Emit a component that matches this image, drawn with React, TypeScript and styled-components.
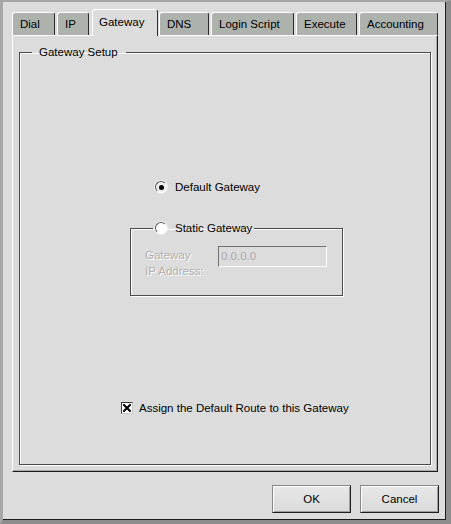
import React from "react";
import styled, { createGlobalStyle, css } from "styled-components";

const GlobalStyle = createGlobalStyle`
  html, body { margin: 0; padding: 0; background: #dcdcdc; }
  body {
    font-family: "Liberation Sans", Arial, sans-serif;
    font-size: 11.5px;
    color: #000;
  }
  * { box-sizing: border-box; }
`;

const Frame = styled.div`
  width: 451px;
  height: 524px;
  background: #dcdcdc;
  border-left: 3px solid #a6a6a6;
  border-top: 2px solid #a6a6a6;
  border-right: 5px solid #8c8c8c;
  border-bottom: 4px solid #8c8c8c;
  display: flex;
  flex-direction: column;
`;

const Window = styled.div`
  flex: 1;
  display: flex;
  flex-direction: column;
  border-right: 1px solid #1c1c1c;
  border-bottom: 1px solid #1c1c1c;
  padding: 7px 7px 6px 9px;
`;

const TabBar = styled.div`
  height: 26px;
  display: flex;
  align-items: flex-end;
  gap: 2px;
`;

const Tab = styled.div<{ $width: number; $active?: boolean }>`
  width: ${(p) => p.$width}px;
  height: 23px;
  flex: none;
  background: #aeb2ad;
  border-top: 1px solid #ffffff;
  border-left: 1px solid #ffffff;
  border-right: 1px solid #2c2c2c;
  border-radius: 3px 3px 0 0;
  padding: 1px 0 0 7px;
  line-height: 21px;
  white-space: nowrap;
  ${(p) =>
    p.$active &&
    css`
      position: relative;
      z-index: 1;
      height: 27px;
      margin: 0 -1px -1px 1px;
      background: #dcdcdc;
      padding: 2px 0 0 6px;
    `}
`;

const Panel = styled.div`
  flex: 1;
  display: flex;
  border-top: 1px solid #ffffff;
  border-left: 1px solid #ffffff;
  border-right: 1px solid #1c1c1c;
  border-bottom: 1px solid #1c1c1c;
  box-shadow: inset -1px -1px 0 #a8a8a8;
  padding: 9px 6px 6px 6px;
`;

const Group = styled.fieldset`
  flex: 1;
  min-width: 0;
  margin: 0;
  padding: 0;
  border: 1px solid #4a4a4a;
  box-shadow: inset 1px 1px 0 #ffffff, 1px 1px 0 #ffffff;
`;

const GroupLegend = styled.legend`
  margin-left: 12px;
  padding: 0 8px 0 7px;
  line-height: 14px;
`;

const Body = styled.div`
  display: flex;
  flex-direction: column;
  align-items: flex-start;
  padding-left: 101px;
`;

const OptionRow = styled.label<{ $indent: number; $top: number; $gap: number }>`
  display: flex;
  align-items: center;
  gap: ${(p) => p.$gap}px;
  height: 14px;
  line-height: 14px;
  margin-left: ${(p) => p.$indent}px;
  margin-top: ${(p) => p.$top}px;
  white-space: nowrap;
`;

const Radio = styled.span<{ $checked?: boolean }>`
  width: 12px;
  height: 12px;
  flex: none;
  border-radius: 50%;
  border: 1px solid;
  border-color: #5a5a5a #ffffff #ffffff #5a5a5a;
  background: ${(p) => (p.$checked ? "#ececec" : "#ffffff")};
  box-shadow: 0 0 0 1px rgba(255, 255, 255, 0.5);
  display: flex;
  align-items: center;
  justify-content: center;
  &::after {
    content: "";
    display: ${(p) => (p.$checked ? "block" : "none")};
    width: 5px;
    height: 5px;
    border-radius: 50%;
    background: #000;
  }
`;

const SubGroup = styled.fieldset<{ $indent: number; $top: number }>`
  width: 213px;
  margin: ${(p) => p.$top}px 0 0 ${(p) => p.$indent}px;
  padding: 11px 0 16px 14px;
  border: 1px solid #4a4a4a;
  box-shadow: inset 1px 1px 0 #ffffff, 1px 1px 0 #ffffff;
`;

const SubLegend = styled.legend`
  margin-left: 8px;
  padding: 0 2px;
  line-height: 14px;
  display: flex;
  align-items: center;
  gap: 8px;
`;

const FieldRow = styled.div`
  display: flex;
  align-items: flex-start;
`;

const DisabledLabel = styled.div`
  width: 73px;
  margin-top: 1px;
  line-height: 16px;
  color: #b0b0b0;
  text-shadow: 1px 1px 0 #ffffff;
`;

const AddressInput = styled.div`
  width: 109px;
  height: 21px;
  border: 1px solid;
  border-color: #707070 #ffffff #ffffff #707070;
  padding-left: 2px;
  line-height: 19px;
  color: #ababab;
`;

const CheckBox = styled.span`
  width: 12px;
  height: 12px;
  flex: none;
  background: #ffffff;
  border: 1px solid;
  border-color: #3a3a3a #c8c8c8 #c8c8c8 #3a3a3a;
  display: flex;
  align-items: center;
  justify-content: center;
`;

const ButtonRow = styled.div`
  display: flex;
  justify-content: flex-end;
  gap: 9px;
  margin: 13px -1px 0 0;
`;

const Button = styled.button`
  width: 79px;
  height: 28px;
  margin: 0;
  padding: 0;
  font: inherit;
  color: #000;
  background: linear-gradient(#e8e8e8, #dadada);
  border: 1px solid;
  border-color: #8a8a8a #1e1e1e #1e1e1e #8a8a8a;
  box-shadow: inset 1px 1px 0 #ffffff, inset -1px -1px 0 #a0a0a0;
`;

const tabs = [
  { label: "Dial", width: 43 },
  { label: "IP", width: 32 },
  { label: "Gateway", width: 66, active: true },
  { label: "DNS", width: 50 },
  { label: "Login Script", width: 83 },
  { label: "Execute", width: 61 },
  { label: "Accounting", width: 79 },
];

export default function App() {
  return (
    <>
      <GlobalStyle />
      <Frame>
        <Window>
          <TabBar>
            {tabs.map((t) => (
              <Tab key={t.label} $width={t.width} $active={t.active}>
                {t.label}
              </Tab>
            ))}
          </TabBar>
          <Panel>
            <Group>
              <GroupLegend>Gateway Setup</GroupLegend>
              <Body>
                <OptionRow $indent={34} $top={121} $gap={8}>
                  <Radio $checked />
                  Default Gateway
                </OptionRow>
                <SubGroup $indent={9} $top={27}>
                  <SubLegend>
                    <Radio />
                    Static Gateway
                  </SubLegend>
                  <FieldRow>
                    <DisabledLabel>
                      Gateway
                      <br />
                      IP Address:
                    </DisabledLabel>
                    <AddressInput>0.0.0.0</AddressInput>
                  </FieldRow>
                </SubGroup>
                <OptionRow $indent={0} $top={105} $gap={6}>
                  <CheckBox>
                    <svg width="8" height="8" viewBox="0 0 8 8">
                      <path d="M1 1 L7 7 M7 1 L1 7" stroke="#000" strokeWidth="2" strokeLinecap="square" />
                    </svg>
                  </CheckBox>
                  Assign the Default Route to this Gateway
                </OptionRow>
              </Body>
            </Group>
          </Panel>
          <ButtonRow>
            <Button>OK</Button>
            <Button>Cancel</Button>
          </ButtonRow>
        </Window>
      </Frame>
    </>
  );
}
